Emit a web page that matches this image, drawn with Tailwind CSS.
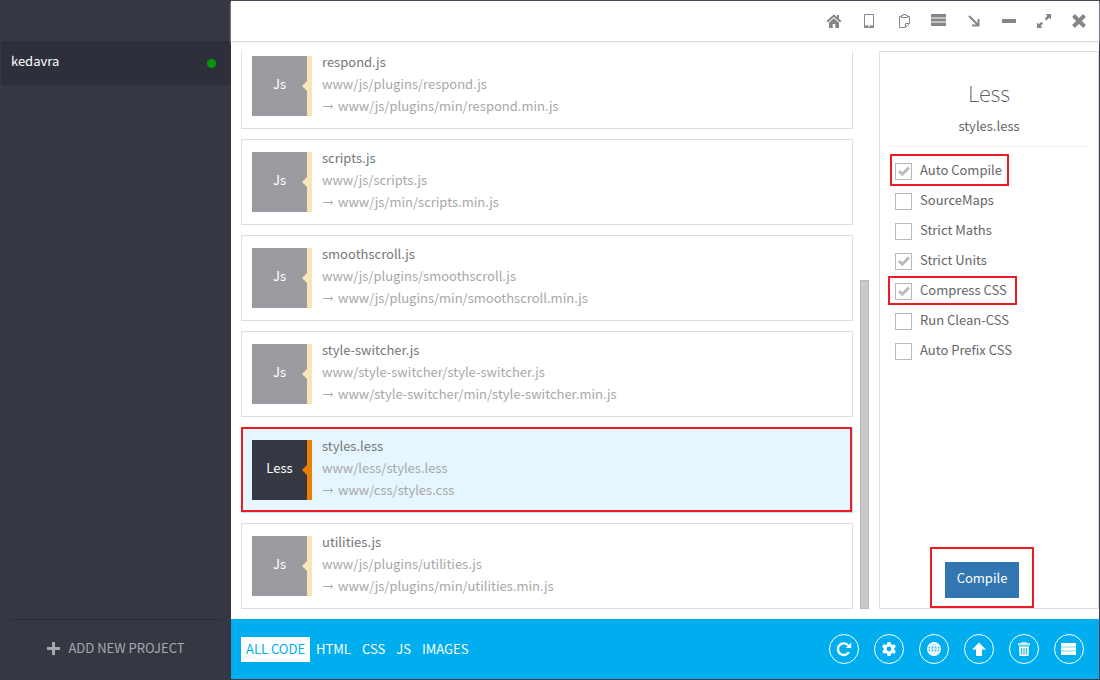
<!DOCTYPE html>
<html lang="en">
<head>
<meta charset="utf-8">
<meta name="viewport" content="width=device-width, initial-scale=1">
<title>kedavra</title>
<script src="https://cdn.jsdelivr.net/npm/@tailwindcss/browser@4"></script>
</head>
<body class="flex h-screen overflow-hidden bg-[#353842] font-['Noto_Sans_CJK_SC','Noto_Sans',sans-serif] text-[13px] leading-[22px] text-[#666]">

<aside class="flex w-[231px] shrink-0 flex-col pt-[41px] text-white">
  <a href="#kedavra" class="ml-px flex h-11 items-center justify-between bg-[#2d2f3b] pr-[15px] pl-[10px]">
    <span class="-mt-1">kedavra</span>
    <span class="mt-px size-[9px] rounded-full bg-[#0a940a]"></span>
  </a>
  <div class="mt-auto mr-[10px] ml-[11px] flex h-[61px] justify-center border-t border-[#2a2c37] pt-[17px]">
    <button type="button" class="flex h-[22px] items-center gap-2 text-[#a5a8ad]">
      <svg class="size-[13px]" viewBox="0 0 13 13" fill="currentColor"><path d="M5 0h3v5h5v3H8v5H5V8H0V5h5z"/></svg>
      <span>ADD NEW PROJECT</span>
    </button>
  </div>
</aside>

<div class="flex min-w-0 flex-1 flex-col border-y border-r border-[#3d3e4c] bg-white">
  <header class="flex h-[41px] shrink-0 items-center justify-end gap-[19px] border-b border-[#dcdcdc] pr-[12px] text-[#868686] shadow-[0_1px_2px_#eee]">
    <button type="button" aria-label="Home" class="size-4"><svg viewBox="0 0 16 16" fill="currentColor"><path d="M8 1.200.600 8l1.300 1.400L8 3.900l6.100 5.500L15.400 8 13 5.700V2h-2v1.900z"/><path d="m8 5.300-5 4.500V15h3.700v-4h2.600v4H13V9.800z"/></svg></button>
    <button type="button" aria-label="Tablet" class="size-4"><svg viewBox="0 0 16 16" fill="currentColor"><path fill-rule="evenodd" d="M4 1h8q1 0 1 1v12q0 1-1 1H4q-1 0-1-1V2q0-1 1-1m0 1v10.500h8V2zM7.200 13v1h1.600v-1z"/></svg></button>
    <button type="button" aria-label="Clipboard" class="size-4"><svg viewBox="0 0 16 16" fill="none" stroke="currentColor"><path d="M5 3.500H3.500v11h6l4-4v-7H12M9.500 14.500v-4h4M5.500 4.500v-2h1.500v-1h3v1h1.500v2z"/></svg></button>
    <button type="button" aria-label="List" class="size-4"><svg viewBox="0 0 16 16" fill="currentColor"><path d="M0 1h15v12H0z" opacity=".5"/><path d="M0 1h15v3H0zM0 6h15v2H0zM0 10h15v3H0z"/></svg></button>
    <button type="button" aria-label="Dock to corner" class="size-4"><svg viewBox="0 0 16 16" fill="none" stroke="currentColor" stroke-width="2"><path d="m3 3 9 9M12.500 6v6.500H6"/></svg></button>
    <button type="button" aria-label="Minimize" class="size-4"><svg viewBox="0 0 16 16" fill="currentColor"><path d="M1 6h14v4H1z"/></svg></button>
    <button type="button" aria-label="Maximize" class="size-4"><svg viewBox="0 0 16 16" fill="currentColor"><path d="M9.500 1H15v5.500l-1.700-1.700-2.800 2.700L8.700 5.700l2.600-2.900zM6.500 15H1V9.500l1.700 1.700 2.500-2.400L7 10.600l-2.300 2.600z"/></svg></button>
    <button type="button" aria-label="Close" class="size-4"><svg viewBox="0 0 16 16" fill="none" stroke="currentColor" stroke-width="4"><path d="m2.500 2.500 11 11m0-11-11 11"/></svg></button>
  </header>

  <main class="flex min-h-0 flex-1 pt-[9px] pb-[10px]">
    <ul class="ml-[10px] flex min-w-0 flex-1 flex-col justify-end gap-[10px] overflow-hidden text-[#a8a8a8]">
      <li class="flex h-[86px] shrink-0 gap-[10px] border border-[#dedede] px-[10px] py-[12px]">
        <div class="relative flex size-[60px] shrink-0 items-center justify-center border-r-5 border-[#f7e5b9] bg-[#9b9ca1] text-white"><span class="-mt-1">Js</span><svg class="absolute right-0 h-[10px] w-[5px]" viewBox="0 0 5 10" fill="#f7e5b9"><path d="M5 0v10L0 5z"/></svg></div>
        <div class="-mt-[5px] min-w-0"><h3 class="text-[#777]">respond.js</h3><p>www/js/plugins/respond.js</p><p class="flex items-center gap-1"><svg class="h-[9px] w-3" viewBox="0 0 12 9" fill="none" stroke="currentColor"><path d="M1 4.500h10M8.500 2.500l2 2-2 2"/></svg>www/js/plugins/min/respond.min.js</p></div>
      </li>
      <li class="flex h-[86px] shrink-0 gap-[10px] border border-[#dedede] px-[10px] py-[12px]">
        <div class="relative flex size-[60px] shrink-0 items-center justify-center border-r-5 border-[#f7e5b9] bg-[#9b9ca1] text-white"><span class="-mt-1">Js</span><svg class="absolute right-0 h-[10px] w-[5px]" viewBox="0 0 5 10" fill="#f7e5b9"><path d="M5 0v10L0 5z"/></svg></div>
        <div class="-mt-[5px] min-w-0"><h3 class="text-[#777]">scripts.js</h3><p>www/js/scripts.js</p><p class="flex items-center gap-1"><svg class="h-[9px] w-3" viewBox="0 0 12 9" fill="none" stroke="currentColor"><path d="M1 4.500h10M8.500 2.500l2 2-2 2"/></svg>www/js/min/scripts.min.js</p></div>
      </li>
      <li class="flex h-[86px] shrink-0 gap-[10px] border border-[#dedede] px-[10px] py-[12px]">
        <div class="relative flex size-[60px] shrink-0 items-center justify-center border-r-5 border-[#f7e5b9] bg-[#9b9ca1] text-white"><span class="-mt-1">Js</span><svg class="absolute right-0 h-[10px] w-[5px]" viewBox="0 0 5 10" fill="#f7e5b9"><path d="M5 0v10L0 5z"/></svg></div>
        <div class="-mt-[5px] min-w-0"><h3 class="text-[#777]">smoothscroll.js</h3><p>www/js/plugins/smoothscroll.js</p><p class="flex items-center gap-1"><svg class="h-[9px] w-3" viewBox="0 0 12 9" fill="none" stroke="currentColor"><path d="M1 4.500h10M8.500 2.500l2 2-2 2"/></svg>www/js/plugins/min/smoothscroll.min.js</p></div>
      </li>
      <li class="flex h-[86px] shrink-0 gap-[10px] border border-[#dedede] px-[10px] py-[12px]">
        <div class="relative flex size-[60px] shrink-0 items-center justify-center border-r-5 border-[#f7e5b9] bg-[#9b9ca1] text-white"><span class="-mt-1">Js</span><svg class="absolute right-0 h-[10px] w-[5px]" viewBox="0 0 5 10" fill="#f7e5b9"><path d="M5 0v10L0 5z"/></svg></div>
        <div class="-mt-[5px] min-w-0"><h3 class="text-[#777]">style-switcher.js</h3><p>www/style-switcher/style-switcher.js</p><p class="flex items-center gap-1"><svg class="h-[9px] w-3" viewBox="0 0 12 9" fill="none" stroke="currentColor"><path d="M1 4.500h10M8.500 2.500l2 2-2 2"/></svg>www/style-switcher/min/style-switcher.min.js</p></div>
      </li>
      <li class="relative flex h-[86px] shrink-0 gap-[10px] border border-[#b5e3f4] bg-[#e6f6fe] px-[10px] py-[12px]">
        <div class="relative flex size-[60px] shrink-0 items-center justify-center border-r-5 border-[#e98003] bg-[#353842] text-white"><span class="-mt-1">Less</span><svg class="absolute right-0 h-[10px] w-[5px]" viewBox="0 0 5 10" fill="#e98003"><path d="M5 0v10L0 5z"/></svg></div>
        <div class="-mt-[5px] min-w-0"><h3 class="text-[#777]">styles.less</h3><p>www/less/styles.less</p><p class="flex items-center gap-1"><svg class="h-[9px] w-3" viewBox="0 0 12 9" fill="none" stroke="currentColor"><path d="M1 4.500h10M8.500 2.500l2 2-2 2"/></svg>www/css/styles.css</p></div>
        <span class="pointer-events-none absolute -top-px right-0 bottom-0 -left-px border-2 border-[#ed1c24]"></span>
      </li>
      <li class="flex h-[86px] shrink-0 gap-[10px] border border-[#dedede] px-[10px] py-[12px]">
        <div class="relative flex size-[60px] shrink-0 items-center justify-center border-r-5 border-[#f7e5b9] bg-[#9b9ca1] text-white"><span class="-mt-1">Js</span><svg class="absolute right-0 h-[10px] w-[5px]" viewBox="0 0 5 10" fill="#f7e5b9"><path d="M5 0v10L0 5z"/></svg></div>
        <div class="-mt-[5px] min-w-0"><h3 class="text-[#777]">utilities.js</h3><p>www/js/plugins/utilities.js</p><p class="flex items-center gap-1"><svg class="h-[9px] w-3" viewBox="0 0 12 9" fill="none" stroke="currentColor"><path d="M1 4.500h10M8.500 2.500l2 2-2 2"/></svg>www/js/plugins/min/utilities.min.js</p></div>
      </li>
    </ul>
    <div class="mr-[10px] ml-[7px] flex w-[9px] shrink-0 flex-col justify-end"><div class="h-[59%] border border-[#b9b9b9] bg-[#c9c9c9]"></div></div>

    <section class="flex w-[220px] shrink-0 flex-col border border-[#dedede]">
      <div class="mr-[10px] ml-[10px] border-b border-[#efefef] pt-[22px] pb-[9px] text-center">
        <h2 class="text-[22px] leading-[36px] font-thin text-[#444]">Less</h2>
        <p class="mt-[5px]">styles.less</p>
      </div>
      <form class="flex flex-1 flex-col px-[15px] pt-2">
        <label class="relative flex h-[30px] items-center gap-2 self-start"><input type="checkbox" checked class="peer mt-[3px] size-[17px] appearance-none border border-[#b9b9b9]"><svg class="absolute left-[3px] top-[10px] hidden size-3 peer-checked:block" viewBox="0 0 12 12" fill="none" stroke="#b9b9b9" stroke-width="2.800"><path d="m1 6 3.300 3.300L11 2.500"/></svg><span>Auto Compile</span><span class="pointer-events-none absolute -top-px -right-[7px] -bottom-px -left-[5px] border-2 border-[#ed1c24]"></span></label>
        <label class="relative flex h-[30px] items-center gap-2 self-start"><input type="checkbox" class="peer mt-[3px] size-[17px] appearance-none border border-[#b9b9b9]"><span>SourceMaps</span></label>
        <label class="relative flex h-[30px] items-center gap-2 self-start"><input type="checkbox" class="peer mt-[3px] size-[17px] appearance-none border border-[#b9b9b9]"><span>Strict Maths</span></label>
        <label class="relative flex h-[30px] items-center gap-2 self-start"><input type="checkbox" checked class="peer mt-[3px] size-[17px] appearance-none border border-[#b9b9b9]"><svg class="absolute left-[3px] top-[10px] hidden size-3 peer-checked:block" viewBox="0 0 12 12" fill="none" stroke="#b9b9b9" stroke-width="2.800"><path d="m1 6 3.300 3.300L11 2.500"/></svg><span>Strict Units</span></label>
        <label class="relative flex h-[30px] items-center gap-2 self-start"><input type="checkbox" checked class="peer mt-[3px] size-[17px] appearance-none border border-[#b9b9b9]"><svg class="absolute left-[3px] top-[10px] hidden size-3 peer-checked:block" viewBox="0 0 12 12" fill="none" stroke="#b9b9b9" stroke-width="2.800"><path d="m1 6 3.300 3.300L11 2.500"/></svg><span>Compress CSS</span><span class="pointer-events-none absolute top-px -right-[10px] bottom-0 -left-[7px] border-2 border-[#ed1c24]"></span></label>
        <label class="relative flex h-[30px] items-center gap-2 self-start"><input type="checkbox" class="peer mt-[3px] size-[17px] appearance-none border border-[#b9b9b9]"><span>Run Clean-CSS</span></label>
        <label class="relative flex h-[30px] items-center gap-2 self-start"><input type="checkbox" class="peer mt-[3px] size-[17px] appearance-none border border-[#b9b9b9]"><span>Auto Prefix CSS</span></label>
        <div class="relative mt-auto mb-[10px] ml-[50px] self-start">
          <button type="button" class="flex h-9 w-[74px] items-center justify-center bg-[#3276b1] pb-1 text-white">Compile</button>
          <span class="pointer-events-none absolute -inset-x-[15px] -top-[15px] -bottom-[10px] border-2 border-[#ed1c24]"></span>
        </div>
      </form>
    </section>
  </main>

  <footer class="flex h-[60px] shrink-0 items-center justify-between bg-[#00aeef] pr-[15px] pl-[10px] text-white">
    <nav class="flex gap-px">
      <a href="#all" class="bg-white px-[5px] pt-px pb-[2px] text-[#00aeef]">ALL CODE</a>
      <a href="#html" class="px-[5px] pt-px">HTML</a>
      <a href="#css" class="px-[5px] pt-px">CSS</a>
      <a href="#js" class="px-[5px] pt-px">JS</a>
      <a href="#images" class="px-[5px] pt-px">IMAGES</a>
    </nav>
    <div class="flex gap-[15px]">
      <button type="button" aria-label="Refresh" class="flex size-[30px] items-center justify-center rounded-full border border-white"><svg class="size-4" viewBox="0 0 16 16"><path d="M12.800 11A5.800 5.800 0 1 1 12 4.200" fill="none" stroke="#fff" stroke-width="2.400"/><path d="M15.200 1.500v5.500H9.700z" fill="#fff"/></svg></button>
      <button type="button" aria-label="Settings" class="flex size-[30px] items-center justify-center rounded-full border border-white"><svg class="size-4" viewBox="0 0 16 16" fill="#fff"><path fill-rule="evenodd" d="M6.500 1h3l.5 2.200 1.200.7 2.200-.7 1.500 2.600L13.300 7.300v1.400l1.600 1.500-1.500 2.600-2.200-.7-1.200.7-.5 2.200h-3L6 12.800l-1.200-.7-2.200.7-1.500-2.600 1.600-1.500V7.300L1.100 5.800l1.500-2.600 2.200.7L6 3.200zM8 5.600a2.400 2.400 0 1 0 0 4.800 2.400 2.400 0 0 0 0-4.800"/></svg></button>
      <button type="button" aria-label="Browser" class="flex size-[30px] items-center justify-center rounded-full border border-white"><svg class="size-4" viewBox="0 0 16 16" fill="none" stroke="#fff"><circle cx="8" cy="8" r="6.300" fill="#fff" fill-opacity=".25" stroke-width="1.300"/><path d="M8 1.500v13M1.500 8h13M2.500 4.800h11M2.500 11.200h11M7.500 1.500c-4 3.500-4 9.500 0 13M8.500 1.500c4 3.500 4 9.500 0 13" stroke-width="1.200"/></svg></button>
      <button type="button" aria-label="Upload" class="flex size-[30px] items-center justify-center rounded-full border border-white"><svg class="size-4" viewBox="0 0 16 16" fill="#fff"><path d="m8 1.500 7 7h-4V15H5V8.500H1z"/></svg></button>
      <button type="button" aria-label="Delete" class="flex size-[30px] items-center justify-center rounded-full border border-white"><svg class="size-4" viewBox="0 0 16 16" fill="#fff"><path d="M5.500 1h5l1 1H14v2.500H2V2h2.500z" opacity=".75"/><path fill-rule="evenodd" d="M3 5.500h10L12.500 15h-9zM5.200 7v6.500h1V7zM7.500 7v6.500h1V7zM9.800 7v6.500h1V7z"/></svg></button>
      <button type="button" aria-label="Log" class="flex size-[30px] items-center justify-center rounded-full border border-white"><svg class="size-4" viewBox="0 0 16 16" fill="#fff"><path d="M0 2h15v12H0z" opacity=".75"/><path d="M0 2h15v3H0zM0 7h15v2H0zM0 11h15v3H0z"/></svg></button>
    </div>
  </footer>
</div>
</body>
</html>
